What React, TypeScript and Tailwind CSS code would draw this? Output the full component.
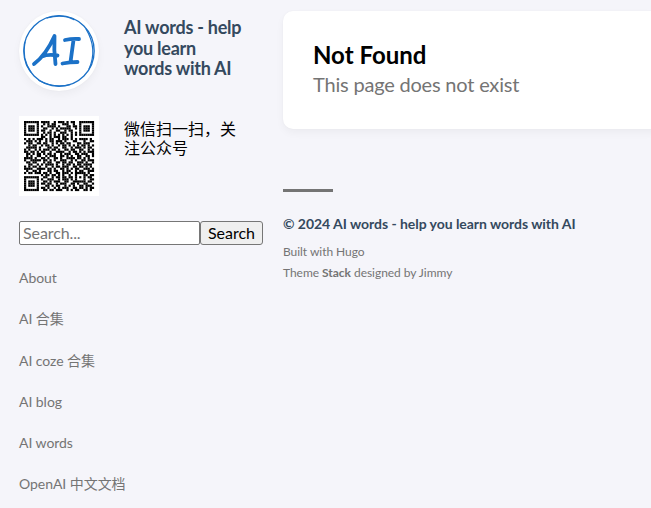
const qrRows = [
  '#######.####..#.###.#.##..#######',
  '#.....#..#.#.##...###..#..#.....#',
  '#.###.#.#..####.#...##.##.#.###.#',
  '#.###.#..##..#.#.#####..#.#.###.#',
  '#.###.#.##..#..##..#.##...#.###.#',
  '#.....#..#.##.#..###..#.#.#.....#',
  '#######.#.#.#.#.#.#.#.#.#.#######',
  '........##..#.###.##..#..........',
  '#.#.#.###.#.##..#.###.#.#.####.#.',
  '.###.#.#..#.##.###.#...##...#..##',
  '#.##..##.##..#.#.##.##...##.###..',
  '..#.##..#.##.#..#.##.#.#.#.##.#.#',
  '.#####.#...##.##..##..#.###.#.##.',
  '#.#..#.#.###.##.#..##.##..##..#.#',
  '##.##.#.##..#..####..#.##.#.#.###',
  '.##.#.##.#.##.#..#.###..##.###..#',
  '.#.#..##..#.###..##.#.#..##..##.#',
  '####.#..##.#..##.#..####.##.#.#..',
  '#..#####.##.#.#..###..#.#..##.###',
  '.##.##...#.##..##.##.##..###.#..#',
  '..##..#.#.####.#..#.##.#.##.####.',
  '#.#.##.#..#..#.##.###..##.##.#.#.',
  '####..####.##.#..##.#.#.##..###.#',
  '.#..##.#...##.##..#.##..#.##..###',
  '#.##.###.##.#..##.###.#.#####.#..',
  '........#.##.##.#.#..#..#...##.##',
  '#######..##..#.##.##.##.#.#.#.##.',
  '#.....#.#..###..#.###.#.#...#..##',
  '#.###.#..##.#.###..##..######.##.',
  '#.###.#.##.##..#.###..##.#..##..#',
  '#.###.#...##.#.##..#.#.#..##.###.',
  '#.....#.##.#..#.#.###..##.##.#.##',
  '#######..##.##.###..#.#.##..##.#.',
];

const links = ['About', 'AI 合集', 'AI coze 合集', 'AI blog', 'AI words', 'OpenAI 中文文档'];

function Logo() {
  return (
    <svg viewBox="0 0 80 80" className="size-20 shrink-0 rounded-full bg-white shadow-[0_4px_8px_rgba(0,0,0,0.04),0_0_2px_rgba(0,0,0,0.04)]">
      <g fill="none" stroke="#1b71c7" strokeLinecap="round" strokeLinejoin="round">
        <ellipse cx="40" cy="40" rx="35.2" ry="35.3" strokeWidth="1.3" />
        <path d="M28 6.8Q44 2.6 55 8.6M67 18Q79 38 70 58M20 69.5Q35 77.5 51 73.6M6 31Q2.5 48 12 61" strokeWidth="1.2" />
        <path d="M15 53Q27 44 35.5 25Q34.7 39 36.5 53M23 45.5Q29 43 38.5 44.5" strokeWidth="3.8" />
        <path d="M46 29Q53 27.5 60 28M54.5 29Q53 40 51.5 51M43.5 52.5Q51 51 58.5 51" strokeWidth="3.8" />
      </g>
    </svg>
  );
}

function QrCode() {
  return (
    <svg viewBox="0 0 80 80" className="size-20 shrink-0 bg-white" role="img">
      <g transform="translate(5 5) scale(2.1212)">
        {qrRows.flatMap((row, y) =>
          [...row].map((cell, x) => (cell === '#' ? <rect key={`${x}-${y}`} x={x} y={y} width="1.04" height="1.04" /> : null)),
        )}
      </g>
    </svg>
  );
}

export default function App() {
  return (
    <div className="flex h-[508px] w-[651px] overflow-hidden bg-[#f5f5fa] font-['Lato','Noto_Sans_CJK_SC',sans-serif] text-black">
      <aside className="ml-[19px] w-[244px] shrink-0 pt-[11px]">
        <header className="flex gap-[25px]">
          <Logo />
          <h1 className="w-[120px] pt-[6px] text-[18px] leading-[20.5px] font-bold tracking-[-0.25px] text-[#34495e]">AI words - help you learn words with AI</h1>
        </header>
        <div className="mt-[25px] flex gap-[25px]">
          <QrCode />
          <p className="w-[120px] pt-[3px] text-[16px] leading-[19px]">微信扫一扫，关注公众号</p>
        </div>
        <form className="mt-[25px] flex h-6">
          <input placeholder="Search..." className="h-6 w-[181px] rounded-[2px] border border-[#767676] bg-white px-[3px] pb-[2px] text-[16px] leading-5 tracking-[-0.1px] placeholder:text-[#757575]" />
          <button type="button" className="h-6 w-[63px] rounded-[3px] border border-[#767676] bg-[#efefef] text-[16px] leading-5">Search</button>
        </form>
        <nav className="mt-[12.2px]">
          {links.map((label) => (
            <a key={label} className="block h-[41.2px] text-[14px] leading-[41.2px] tracking-[-0.05px] text-[#747474]">{label}</a>
          ))}
        </nav>
      </aside>
      <main className="ml-5 w-[380px] shrink-0 pt-[11px]">
        <section className="h-[118px] rounded-[10px] bg-white px-[30px] pt-[29px] shadow-[0_4px_8px_rgba(0,0,0,0.04),0_0_2px_rgba(0,0,0,0.04)]">
          <h2 className="text-[24px] leading-[30px] font-bold">Not Found</h2>
          <h3 className="-mt-px text-[20px] leading-[30px] tracking-[-0.2px] text-[#747474]">This page does not exist</h3>
        </section>
        <footer className="pt-[60px] text-[12px] text-[#747474]">
          <div className="h-[3px] w-[50px] bg-[#747474]" />
          <div className="mt-[22px] text-[14px] leading-5 font-bold tracking-[-0.04px] text-[#34495e]">© 2024 AI words - help you learn words with AI</div>
          <div className="mt-[7px] leading-[21px] tracking-[-0.04px]">Built with Hugo<br />Theme <b>Stack</b> designed by Jimmy</div>
        </footer>
      </main>
    </div>
  );
}
